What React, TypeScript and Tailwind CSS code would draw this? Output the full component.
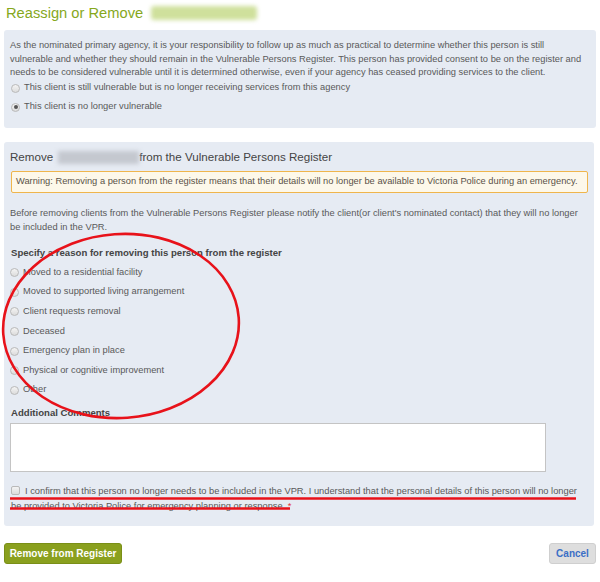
import React from "react"

const reasons = [
  "Moved to a residential facility",
  "Moved to supported living arrangement",
  "Client requests removal",
  "Deceased",
  "Emergency plan in place",
  "Physical or cognitive improvement",
  "Other",
]

// small grey radio like the old IE-style input
function Radio({ checked = false }: { checked?: boolean }) {
  return (
    <span className="inline-flex h-[9px] w-[9px] shrink-0 items-center justify-center rounded-full border border-[#b9b9b9] bg-gradient-to-b from-[#f4f4f4] to-[#dcdcdc]">
      {checked && <span className="h-[4px] w-[4px] rounded-full bg-[#555]" />}
    </span>
  )
}

export default function App() {
  return (
    <div className="relative h-[582px] w-[600px] bg-white px-[4px] pt-[3px] font-['Liberation_Sans',Arial,sans-serif] text-[9.3px] text-[#595959]">
      {/* Title */}
      <h1 className="flex h-[20px] items-center gap-[8px] pl-[2px] text-[14.7px] leading-[20px] text-[#86a81c]">
        <span>Reassign or Remove</span>
        <span className="h-[14px] w-[106px] rounded-[3px] bg-[#cfe09c] blur-[2px]" />
      </h1>

      {/* Panel 1 */}
      <div className="mt-[7px] h-[98px] w-[592px] rounded-[3px] bg-[#e6ebf3] px-[6px] pt-[9px]">
        <p className="whitespace-nowrap leading-[13.5px]">
          As the nominated primary agency, it is your responsibility to follow up as much as practical to determine whether this person is still
          <br />
          vulnerable and whether they should remain in the Vulnerable Persons Register. This person has provided consent to be on the register and
          <br />
          needs to be considered vulnerable until it is determined otherwise, even if your agency has ceased providing services to the client.
        </p>
        <div className="mt-[-1px] flex h-[19px] items-center gap-[4px] pl-[1px]">
          <Radio />
          <span>This client is still vulnerable but is no longer receiving services from this agency</span>
        </div>
        <div className="flex h-[19px] items-center gap-[4px] pl-[1px]">
          <Radio checked />
          <span>This client is no longer vulnerable</span>
        </div>
      </div>

      {/* Panel 2 */}
      <div className="mt-[14px] h-[384px] w-[590px] rounded-[3px] bg-[#e6ebf3] px-[6px] pt-[8px]">
        <h2 className="flex h-[14px] items-center text-[11.6px] leading-[14px] text-[#444]">
          <span>Remove</span>
          <span className="ml-[5px] h-[13px] w-[81px] bg-[#c4c8cf] blur-[2px]" />
          <span>from the Vulnerable Persons Register</span>
        </h2>

        <div className="ml-[1px] mt-[7px] flex h-[22px] w-[577px] items-center rounded-[2px] border border-[#efb54c] bg-[#fdf8ea] pl-[4px] text-[#5a5248]">
          Warning: Removing a person from the register means that their details will no longer be available to Victoria Police during an emergency.
        </div>

        <p className="mt-[13px] w-[575px] leading-[14px]">
          Before removing clients from the Vulnerable Persons Register please notify the client(or client's nominated contact) that they will no longer
          be included in the VPR.
        </p>

        <div className="mt-[12px] pl-[1px] text-[9.6px] font-bold leading-[14px] text-[#444]">
          Specify a reason for removing this person from the register
        </div>
        <div className="mt-[3px] flex flex-col">
          {reasons.map((r) => (
            <label key={r} className="flex h-[19.6px] items-center gap-[4px]">
              <Radio />
              <span>{r}</span>
            </label>
          ))}
        </div>

        <div className="mt-[6px] pl-[1px] text-[9.6px] font-bold leading-[14px] text-[#444]">Additional Comments</div>
        <div className="mt-[3px] h-[49px] w-[536px] border border-[#c4c4c4] bg-white" />

        <div className="mt-[12px] pl-[1px] leading-[15px]">
          <span className="mr-[5px] inline-block h-[9px] w-[9px] translate-y-[1px] rounded-[2px] border border-[#b9b9b9] bg-gradient-to-b from-[#f4f4f4] to-[#dcdcdc]" />
          I confirm that this person no longer needs to be included in the VPR. I understand that the personal details of this person will no longer
          be provided to Victoria Police for emergency planning or response. <span className="text-[#e23b3b]">*</span>
        </div>
      </div>

      {/* Buttons */}
      <div className="mt-[17px] flex items-center justify-between">
        <button className="h-[21px] w-[118px] rounded-[3px] border border-[#7a8f17] bg-[#8aa01e] text-[10px] font-bold text-white">
          Remove from Register
        </button>
        <button className="h-[21px] w-[47px] rounded-[3px] border border-[#cfcfcf] bg-[#dedede] text-[10px] font-bold text-[#3b6fc6]">
          Cancel
        </button>
      </div>

      {/* red annotations drawn over the screenshot */}
      <svg className="pointer-events-none absolute left-0 top-0" width="600" height="582">
        <ellipse cx="121" cy="326" rx="118" ry="92" fill="none" stroke="#e8121a" strokeWidth="2.6" transform="rotate(-4 121 326)" />
        <line x1="10" y1="498.5" x2="576" y2="498.5" stroke="#e8121a" strokeWidth="2.4" />
        <line x1="10" y1="508.5" x2="290" y2="508.5" stroke="#e8121a" strokeWidth="2.4" />
      </svg>
    </div>
  )
}
